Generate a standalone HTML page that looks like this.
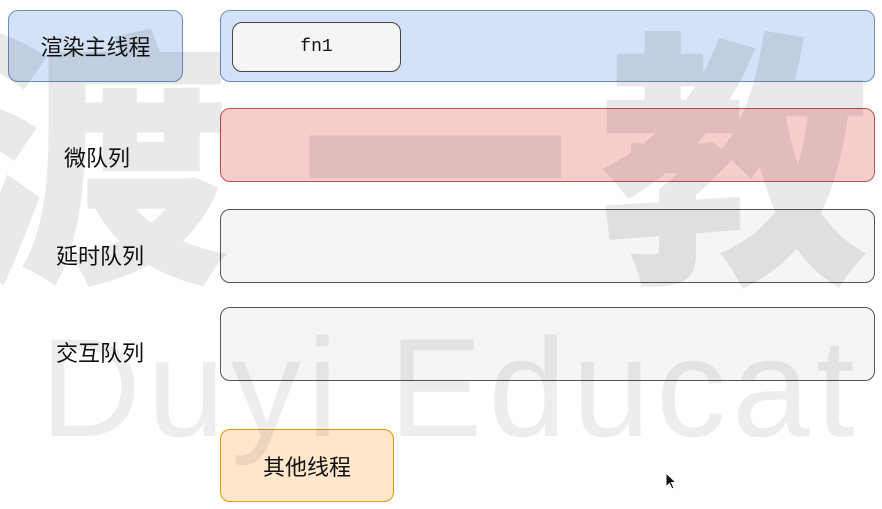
<!DOCTYPE html>
<html><head><meta charset="utf-8"><style>
body{margin:0;width:882px;height:509px;background:#fff;position:relative;overflow:hidden;font-family:"Liberation Sans","Noto Sans CJK SC",sans-serif}
.b{position:absolute;box-sizing:border-box;border-radius:10px;border:1.5px solid #555;display:flex;align-items:center;justify-content:center;font-size:22px;color:#111}
.l{position:absolute;font-size:22px;color:#111;transform:translateX(-50%)}
.wm{position:absolute;color:rgba(0,0,0,0.085);font-family:"Noto Sans CJK SC",sans-serif;font-weight:900;line-height:1;z-index:5;pointer-events:none}
</style></head><body>
<div class="b" style="left:8px;top:10px;width:175px;height:72px;background:#d4e2f7;border-color:#6c8ebf">渲染主线程</div>
<div class="b" style="left:220px;top:10px;width:655px;height:72px;background:#d4e2f7;border-color:#6c8ebf"></div>
<div class="b" style="left:232px;top:22px;width:169px;height:50px;background:#f5f5f5;border-color:#444;font-family:'Liberation Mono',monospace;font-size:18px">fn1</div>
<div class="b" style="left:220px;top:108px;width:655px;height:74px;background:#f8cecc;border-color:#b85450"></div>
<div class="b" style="left:220px;top:209px;width:655px;height:74px;background:#f5f5f5"></div>
<div class="b" style="left:220px;top:307px;width:655px;height:74px;background:#f5f5f5"></div>
<div class="b" style="left:220px;top:429px;width:174px;height:73px;background:#ffe6cc;border-color:#d79b00">其他线程</div>
<div class="l" style="left:97px;top:141px">微队列</div>
<div class="l" style="left:100px;top:239px">延时队列</div>
<div class="l" style="left:100px;top:336px">交互队列</div>
<div class="wm" style="left:-40px;top:10px;font-size:270px">渡</div>
<div class="wm" style="left:300px;top:10px;font-size:270px">一</div>
<div class="wm" style="left:600px;top:10px;font-size:270px">教</div>
<div class="wm" style="left:40px;top:318px;font-size:140px;font-family:'Liberation Sans',sans-serif;font-weight:400;letter-spacing:6px;white-space:nowrap;color:rgba(0,0,0,0.07)">Duyi Educat</div>
<svg style="position:absolute;left:665px;top:472px" width="14" height="20" viewBox="0 0 14 20"><path d="M1 1 L1 15 L4.5 11.5 L7 17 L9 16 L6.5 10.5 L11 10.5 Z" fill="#111" stroke="#fff" stroke-width="1"/></svg>
</body></html>
